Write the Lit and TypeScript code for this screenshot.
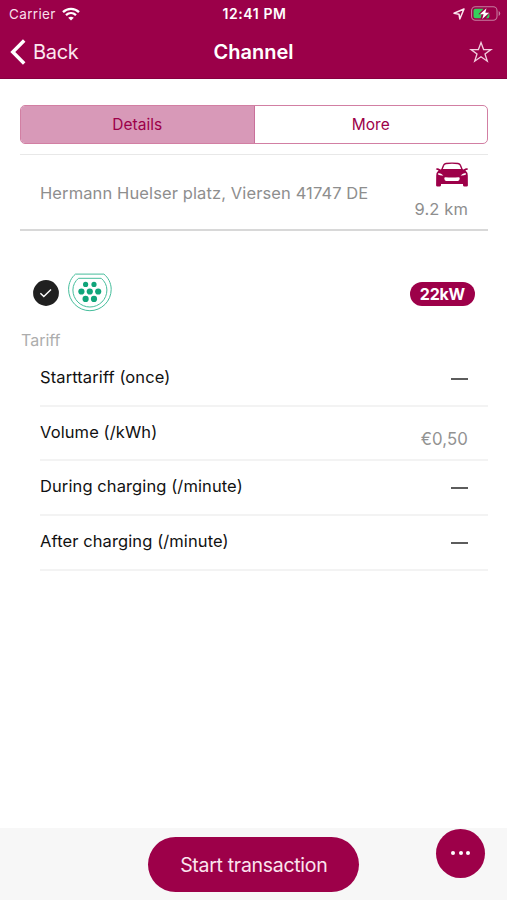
import { LitElement, html, css, svg } from "lit";
import { customElement, property } from "lit/decorators.js";

const wifi = html`<svg width="18" height="14" viewBox="0 0 18 14" fill="none" stroke="#fff" stroke-width="2.3">
  <path d="M1 5.1C5.4 .7 12.6 .7 17 5.1" />
  <path d="M4 8.2C6.9 5.5 11.1 5.5 14 8.2" />
  <path d="M9 13.6 6.2 10.7Q9 8.6 11.8 10.7Z" fill="#fff" stroke="none" />
</svg>`;

const locationArrow = html`<svg width="12" height="12" viewBox="0 0 12 12" fill="none" stroke="#fbe8f0" stroke-width="1.5" stroke-linejoin="round">
  <path d="M11 1 1 5.3 6 6.2 6.8 11Z" />
</svg>`;

const battery = html`<svg width="30" height="15" viewBox="0 0 31 15">
  <rect x=".6" y=".6" width="26.3" height="13.8" rx="4" fill="none" stroke="#c77ea1" stroke-width="1.1" />
  <path d="M28.6 5v5Q30.2 9.3 30.2 7.5T28.6 5Z" fill="#c77ea1" />
  <path d="M4.6 2.6H13L7.6 8.4H11L10 12.4H4.6Q2.6 12.4 2.6 10.4V4.6Q2.6 2.6 4.6 2.6Z" fill="#35cf5b" />
  <path d="M15.6 12.4 19 7V10.4Q19 12.4 17.4 12.4Z" fill="#35cf5b" />
  <path d="M16 2.2 9.2 8.4H13L11.6 13.2 18.8 6.6H14.8Z" fill="#fff" />
</svg>`;

const chevron = html`<svg width="16" height="26" viewBox="0 0 16 26" fill="none" stroke="#fff" stroke-width="3.5">
  <path d="M14.2 1.6 2.8 13 14.2 24.4" />
</svg>`;

const star = html`<svg width="24" height="22" viewBox="0 0 24 22" fill="none" stroke="#f3cfe0" stroke-width="1.3">
  <path d="M12 1.6 14.6 8.6H22L16 13 18.3 20.2 12 15.8 5.7 20.2 8 13 2 8.6H9.4Z" />
</svg>`;

const car = html`<svg width="34" height="26" viewBox="0 0 34 26">
  <path d="M6.7 8 8.6 3.3Q9.2 1.7 11 1.5Q17 .7 23 1.5Q24.8 1.7 25.4 3.3L27.3 8" fill="none" stroke="#9d0049" stroke-width="1.4" />
  <path d="M.8 7.2Q.9 6.2 3 6.3L5.6 7.4 7 7H27L28.4 7.4 31 6.3Q33.1 6.2 33.2 7.2 31.4 8.2 30.4 8.2 32.7 10.3 32.8 13.5L32.9 23.5Q32.8 24.6 31.6 24.6H29.4Q28.2 24.6 28 23.3V21.9H6V23.3Q5.8 24.6 4.6 24.6H2.4Q1.2 24.6 1.1 23.5L1.2 13.5Q1.3 10.3 3.6 8.2 2.6 8.2 .8 7.2Z" fill="#9d0049" />
  <path d="M3.4 10.9Q6.2 10.9 8.4 13.4 5.6 13.8 3 12.5ZM30.6 10.9Q27.8 10.9 25.6 13.4 28.4 13.8 31 12.5Z" fill="#fff" />
  <path d="M10.4 15.2Q17 15.9 23.6 15.2 24.8 15.2 24.7 16.6 24.5 18.9 23 19H11Q9.5 18.9 9.3 16.6 9.2 15.2 10.4 15.2Z" fill="#fff" />
</svg>`;

const check = html`<svg width="26" height="26" viewBox="0 0 26 26">
  <circle cx="13" cy="13" r="12.9" fill="#202020" />
  <path d="M7.4 13.3 10.8 16.6 18 9.5" fill="none" stroke="#fff" stroke-width="1.4" />
</svg>`;

const pins = [
  [17.6, 11.4, 2.6], [26, 11.4, 2.6],
  [13.4, 18.5, 3.1], [21.8, 18.5, 3.1], [30.2, 18.5, 3.1],
  [17.6, 25.9, 3.1], [26, 25.9, 3.1],
];

const plug = html`<svg width="44" height="39" viewBox="0 0 44 39">
  <g fill="none" stroke="#45bd9b" stroke-width="1">
    <path d="M7.5 1.1H35.9C39.9 4.3 43.2 9.8 43.2 16.4A21.3 21.3 0 0 1 .6 16.4C.6 9.8 3.5 4.3 7.5 1.1Z" />
    <path d="M10.5 5.3H33.2C36.6 8.1 38.9 12.2 38.9 17A17 17 0 0 1 4.9 17C4.9 12.2 7.1 8.1 10.5 5.3Z" />
  </g>
  ${pins.map(([x, y, r]) => svg`<circle cx=${x} cy=${y} r=${r} fill="#10a57a" />`)}
</svg>`;

@customElement("tariff-row")
class TariffRow extends LitElement {
  @property() label = "";
  @property() price = "";

  static styles = css`
    :host {
      display: flex;
      justify-content: space-between;
      box-sizing: border-box;
      height: 55px;
      margin-left: 40px;
      margin-right: 19px;
      padding-right: 20px;
      border-bottom: 2px solid #f3f3f3;
      font-size: 16.5px;
      line-height: 20px;
      letter-spacing: 0.1px;
    }
    .label {
      padding-top: 15px;
      color: #111;
    }
    .price {
      padding-top: 22px;
      color: #929292;
      font-size: 16.8px;
    }
    .none {
      width: 17.5px;
      height: 2px;
      margin-top: 26px;
      background: #5c5c5c;
    }
  `;

  render() {
    return html`<span class="label">${this.label}</span>
      ${this.price ? html`<span class="price">${this.price}</span>` : html`<span class="none"></span>`}`;
  }
}

@customElement("app-root")
class AppRoot extends LitElement {
  static styles = css`
    :host {
      display: flex;
      flex-direction: column;
      box-sizing: border-box;
      width: 507px;
      height: 900px;
      overflow: hidden;
      background: #fff;
      font-family: Inter, "Liberation Sans", sans-serif;
    }
    svg {
      display: block;
      flex: none;
    }
    .top {
      height: 79px;
      flex: none;
      box-sizing: border-box;
      background: #9b0049;
      color: #fff;
      border-bottom: 1px solid #870040;
    }
    .status,
    .nav {
      display: grid;
      grid-template-columns: 1fr auto 1fr;
      align-items: center;
    }
    .status {
      height: 27px;
      padding: 0 6px 0 9px;
      font-size: 13.5px;
    }
    .nav {
      height: 50px;
      padding: 0 14px 0 10px;
      font-size: 20px;
    }
    .start,
    .end {
      display: flex;
      align-items: center;
      gap: 6px;
    }
    .end {
      justify-content: flex-end;
    }
    .carrier {
      color: #f8dfea;
      letter-spacing: 0.35px;
    }
    .clock,
    .title {
      font-weight: 600;
    }
    .clock {
      margin-right: 1px;
      font-size: 14px;
      letter-spacing: 0.6px;
    }
    .title {
      margin-left: 4px;
    }
    .back {
      gap: 7px;
      color: #fbe8f0;
      letter-spacing: -0.3px;
    }
    .tabs {
      display: flex;
      flex: none;
      box-sizing: border-box;
      height: 39px;
      margin: 26px 19px 0 20px;
      border: 1px solid #d27fa3;
      border-radius: 5px;
      overflow: hidden;
      font-size: 15.5px;
      color: #9d0049;
    }
    .tab {
      flex: 1;
      display: flex;
      align-items: center;
      justify-content: center;
    }
    .active {
      background: #d899b8;
      border-right: 1px solid #c9709a;
    }
    .place {
      display: flex;
      flex: none;
      justify-content: space-between;
      box-sizing: border-box;
      height: 77px;
      margin: 10px 19px 0 20px;
      padding: 0 20px;
      border-top: 1px solid #e8e8e8;
      border-bottom: 2px solid #d8d8d8;
      color: #8e8e8e;
      font-size: 16.5px;
      line-height: 20px;
      letter-spacing: 0.11px;
    }
    .address {
      padding-top: 28px;
    }
    .distance {
      display: flex;
      flex-direction: column;
      align-items: flex-end;
      gap: 11px;
      padding-top: 7px;
    }
    .distance svg {
      margin-right: -0.5px;
    }
    .connector {
      display: flex;
      flex: none;
      align-items: center;
      height: 39px;
      margin: 42px 32px 0 32.5px;
      gap: 9px;
    }
    .power {
      margin-left: auto;
      height: 24px;
      line-height: 24px;
      padding: 0 10px;
      margin-top: 2px;
      border-radius: 12px;
      background: #9d0049;
      color: #fff;
      font-size: 16px;
      font-weight: 700;
      letter-spacing: -0.2px;
    }
    .section {
      margin: 18px 0 0 21px;
      height: 20px;
      line-height: 20px;
      font-size: 16px;
      color: #adadad;
    }
    .list {
      padding-top: 2px;
    }
    .list tariff-row:nth-child(2) {
      height: 54px;
    }
    .bottom {
      display: grid;
      grid-template-columns: 1fr auto 1fr;
      flex: none;
      box-sizing: border-box;
      height: 72px;
      margin-top: auto;
      background: #f7f7f7;
    }
    .primary {
      grid-column: 2;
      display: flex;
      align-items: center;
      justify-content: center;
      width: 211px;
      height: 55px;
      margin-top: 9px;
      margin-left: 0.5px;
      border-radius: 28px;
      background: #9d0049;
      color: #fbe4ee;
      font-size: 19.5px;
      letter-spacing: -0.3px;
    }
    .more {
      justify-self: end;
      display: flex;
      align-items: center;
      justify-content: center;
      gap: 3.4px;
      box-sizing: border-box;
      width: 49px;
      height: 49px;
      margin: 1px 22px 0 0;
      padding-bottom: 2px;
      border-radius: 50%;
      background: #9d0049;
    }
    .dot {
      width: 4px;
      height: 4px;
      border-radius: 50%;
      background: #fff;
    }
  `;

  render() {
    return html`
      <header class="top">
        <div class="status">
          <div class="start"><span class="carrier">Carrier</span>${wifi}</div>
          <span class="clock">12:41 PM</span>
          <div class="end">${locationArrow}${battery}</div>
        </div>
        <div class="nav">
          <div class="start back">${chevron}<span>Back</span></div>
          <span class="title">Channel</span>
          <div class="end">${star}</div>
        </div>
      </header>
      <div class="tabs">
        <div class="tab active">Details</div>
        <div class="tab">More</div>
      </div>
      <section class="place">
        <span class="address">Hermann Huelser platz, Viersen 41747 DE</span>
        <div class="distance">${car}<span>9.2 km</span></div>
      </section>
      <section class="connector">
        ${check}${plug}
        <span class="power">22kW</span>
      </section>
      <div class="section">Tariff</div>
      <div class="list">
        <tariff-row label="Starttariff (once)"></tariff-row>
        <tariff-row label="Volume (/kWh)" price="€0,50"></tariff-row>
        <tariff-row label="During charging (/minute)"></tariff-row>
        <tariff-row label="After charging (/minute)"></tariff-row>
      </div>
      <footer class="bottom">
        <div class="primary">Start transaction</div>
        <div class="more"><i class="dot"></i><i class="dot"></i><i class="dot"></i></div>
      </footer>
    `;
  }
}
